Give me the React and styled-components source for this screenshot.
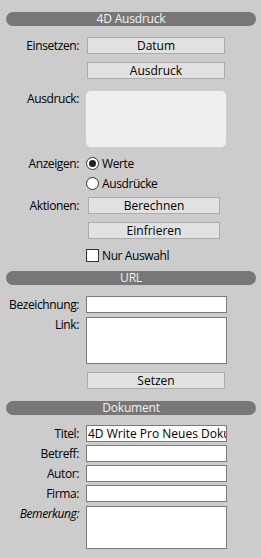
import React from "react";
import styled, { createGlobalStyle } from "styled-components";

const Global = createGlobalStyle`
  html, body { margin: 0; padding: 0; background: #cccccc; }
  body { font-family: "Open Sans", "Noto Sans", sans-serif; font-size: 12px; letter-spacing: -0.4px; color: #000; }
  * { box-sizing: border-box; }
`;

const Page = styled.div`
  width: 261px;
  height: 558px;
  padding: 12px 5px 0 6px;
  background: #cccccc;
  display: flex;
  flex-direction: column;
  overflow: hidden;
`;

const Header = styled.div`
  flex: none;
  height: 14px;
  margin-top: ${p => p.$mt || 0}px;
  border-radius: 7px;
  background: #777777;
  color: #f2f2f2;
  font-size: 12px;
  letter-spacing: -0.2px;
  line-height: 14px;
  text-align: center;
`;

const Row = styled.div`
  flex: none;
  display: grid;
  grid-template-columns: 73px 1fr;
  grid-template-rows: ${p => p.$h}px;
  height: ${p => p.$h}px;
  column-gap: 7px;
  align-items: ${p => (p.$top ? "start" : "center")};
  margin-top: ${p => p.$mt || 0}px;
`;

const Label = styled.div`
  text-align: right;
  white-space: nowrap;
  font-style: ${p => (p.$italic ? "italic" : "normal")};
  line-height: 16px;
`;

const Button = styled.button`
  width: ${p => p.$w}px;
  height: 17px;
  margin-left: ${p => p.$ml || 0}px;
  padding: 0;
  border: 1px solid #adadad;
  background: #e1e1e1;
  font: inherit;
  color: #000;
  line-height: 14px;
`;

const ExprBox = styled.div`
  width: 140px;
  height: 56px;
  border-radius: 5px;
  background: #efefef;
`;

const Input = styled.input`
  width: 141px;
  height: 17px;
  border: 1px solid #7a7a7a;
  background: #ffffff;
  padding: 0 0 0 1px;
  font: inherit;
  color: #000;
  outline: none;
`;

const Area = styled.div`
  width: 141px;
  height: ${p => p.$h}px;
  border: 1px solid #7a7a7a;
  background: #ffffff;
`;

const Choice = styled.label`
  display: flex;
  align-items: center;
  gap: 3px;
  line-height: 16px;
`;

const Radio = styled.span`
  flex: none;
  width: 13px;
  height: 13px;
  border-radius: 50%;
  border: 1px solid #333;
  background: #fff;
  display: flex;
  align-items: center;
  justify-content: center;
  &::after {
    content: "";
    width: 7px;
    height: 7px;
    border-radius: 50%;
    background: ${p => (p.$on ? "#222" : "transparent")};
  }
`;

const Box = styled.span`
  flex: none;
  width: 13px;
  height: 13px;
  border: 1px solid #333;
  background: #fff;
`;

const Empty = styled.div``;

export default function App() {
  return (
    <>
      <Global />
      <Page>
        <Header>4D Ausdruck</Header>
        <Row $mt={11} $h={17}>
          <Label>Einsetzen:</Label>
          <Button $w={138} $ml={1}>Datum</Button>
        </Row>
        <Row $mt={8} $h={17}>
          <Empty />
          <Button $w={138} $ml={1}>Ausdruck</Button>
        </Row>
        <Row $mt={12} $h={56} $top>
          <Label>Ausdruck:</Label>
          <ExprBox />
        </Row>
        <Row $mt={10} $h={13}>
          <Label>Anzeigen:</Label>
          <Choice><Radio $on />Werte</Choice>
        </Row>
        <Row $mt={7} $h={13}>
          <Empty />
          <Choice><Radio />Ausdrücke</Choice>
        </Row>
        <Row $mt={7} $h={17}>
          <Label>Aktionen:</Label>
          <Button $w={132} $ml={2}>Berechnen</Button>
        </Row>
        <Row $mt={8} $h={17}>
          <Empty />
          <Button $w={132} $ml={2}>Einfrieren</Button>
        </Row>
        <Row $mt={10} $h={13}>
          <Empty />
          <Choice><Box />Nur Auswahl</Choice>
        </Row>
        <Header $mt={9}>URL</Header>
        <Row $mt={11} $h={17}>
          <Label>Bezeichnung:</Label>
          <Input />
        </Row>
        <Row $mt={4} $h={47} $top>
          <Label>Link:</Label>
          <Area $h={47} />
        </Row>
        <Row $mt={8} $h={17}>
          <Empty />
          <Button $w={138} $ml={1}>Setzen</Button>
        </Row>
        <Header $mt={12}>Dokument</Header>
        <Row $mt={10} $h={17}>
          <Label>Titel:</Label>
          <Input readOnly value="4D Write Pro Neues Dokument" />
        </Row>
        <Row $mt={3} $h={17}>
          <Label>Betreff:</Label>
          <Input />
        </Row>
        <Row $mt={3} $h={17}>
          <Label>Autor:</Label>
          <Input />
        </Row>
        <Row $mt={3} $h={17}>
          <Label>Firma:</Label>
          <Input />
        </Row>
        <Row $mt={4} $h={43} $top>
          <Label $italic>Bemerkung:</Label>
          <Area $h={43} />
        </Row>
      </Page>
    </>
  );
}
